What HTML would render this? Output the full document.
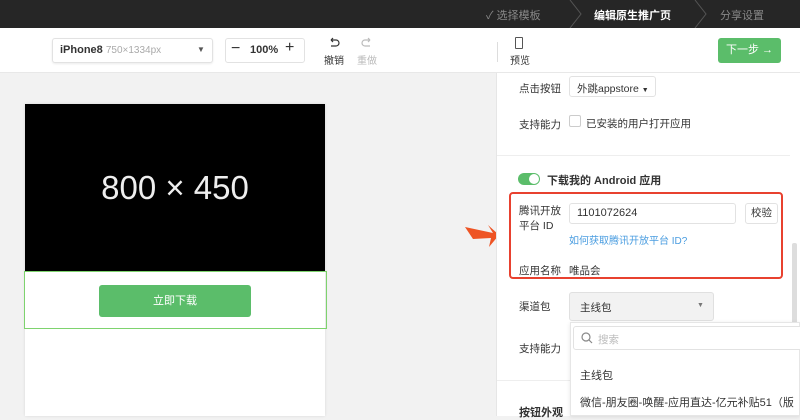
<!DOCTYPE html>
<html><head><meta charset="utf-8"><style>
*{margin:0;padding:0;box-sizing:border-box}
body{width:800px;height:416px;overflow:hidden;font-family:"Liberation Sans","Noto Sans CJK SC",sans-serif;font-size:11px;color:#333;background:#f2f2f2;position:relative}
.a{position:absolute;white-space:nowrap}
.top{left:0;top:0;width:800px;height:28px;background:#262626}
.tb{left:0;top:28px;width:800px;height:45px;background:#fff;border-bottom:1px solid #e8e8e8}
.box{border:1px solid #e2e2e2;border-radius:3px;background:#fff}
.rp{left:496px;top:73px;width:304px;height:343px;background:#fff;border-left:1px solid #e6e6e6}
.lbl{font-size:10.5px;color:#333}
</style></head><body>
<div class="a top"></div>
<div class="a" style="left:486px;top:7px;color:#888;font-size:11px">✓ 选择模板</div>
<svg class="a" style="left:568px;top:0" width="16" height="28"><path d="M2 0 L13 14 L2 28" stroke="#555" fill="none"/></svg>
<div class="a" style="left:594px;top:7px;color:#fff;font-size:11px;font-weight:bold">编辑原生推广页</div>
<svg class="a" style="left:693px;top:0" width="16" height="28"><path d="M2 0 L13 14 L2 28" stroke="#555" fill="none"/></svg>
<div class="a" style="left:720px;top:7px;color:#888;font-size:11px">分享设置</div>

<div class="a tb"></div>
<div class="a box" style="left:52px;top:38px;width:161px;height:25px;box-shadow:0 1px 2px rgba(0,0,0,.08)"></div>
<div class="a" style="left:60px;top:44px;font-size:11px;font-weight:bold">iPhone8 <span style="font-weight:normal;color:#aaa;font-size:10px">750×1334px</span></div>
<div class="a" style="left:197px;top:45px;font-size:8px;color:#555">▼</div>
<div class="a box" style="left:225px;top:38px;width:80px;height:25px"></div>
<div class="a" style="left:231px;top:40px;font-size:16px">−</div>
<div class="a" style="left:250px;top:44px;font-size:11px;font-weight:bold">100%</div>
<div class="a" style="left:285px;top:39px;font-size:16px">+</div>
<svg class="a" style="left:328px;top:37px" width="12" height="12"><path d="M3 3 H8 A3 3 0 0 1 8 9 H3 M3 3 L5 1 M3 3 L5 5" stroke="#333" fill="none" stroke-width="1.2"/></svg>
<div class="a" style="left:324px;top:52px;font-size:10px">撤销</div>
<svg class="a" style="left:361px;top:37px" width="12" height="12"><path d="M9 3 H4 A3 3 0 0 0 4 9 H9 M9 3 L7 1 M9 3 L7 5" stroke="#bbb" fill="none" stroke-width="1.2"/></svg>
<div class="a" style="left:357px;top:52px;font-size:10px;color:#bbb">重做</div>
<div class="a" style="left:497px;top:42px;width:1px;height:20px;background:#ddd"></div>
<div class="a" style="left:515px;top:37px;width:8px;height:12px;border:1px solid #555;border-radius:1px"></div>
<div class="a" style="left:510px;top:52px;font-size:10px">预览</div>
<div class="a" style="left:718px;top:38px;width:63px;height:25px;background:#5bbd6a;border-radius:3px;color:#fff;font-size:11px;line-height:25px;text-align:center">下一步 →</div>

<div class="a" style="left:25px;top:104px;width:300px;height:312px;background:#fff;box-shadow:0 0 3px rgba(0,0,0,.1)"></div>
<div class="a" style="left:25px;top:104px;width:300px;height:168px;background:#000;color:#eee;font-size:33px;text-align:center;line-height:168px">800 × 450</div>
<div class="a" style="left:24px;top:271px;width:303px;height:58px;border:1.5px solid #7ed36e"></div>
<div class="a" style="left:99px;top:285px;width:152px;height:32px;background:#5bbd6a;border-radius:3px;color:#fff;font-size:11px;line-height:32px;text-align:center">立即下载</div>

<svg class="a" style="left:463px;top:221px" width="36" height="26"><path d="M2 6 L30 12 L25 4 L36 14 L26 26 L28 17 L10 18 Z" fill="#ee5424"/></svg>

<div class="a rp"></div>
<div class="a lbl" style="left:519px;top:81px">点击按钮</div>
<div class="a box" style="left:569px;top:76px;width:87px;height:21px;padding:4px 7px;font-size:10.5px">外跳appstore <span style="font-size:7px">▼</span></div>
<div class="a lbl" style="left:519px;top:117px">支持能力</div>
<div class="a" style="left:569px;top:115px;width:12px;height:12px;border:1px solid #ccc;border-radius:2px"></div>
<div class="a lbl" style="left:586px;top:116px">已安装的用户打开应用</div>
<div class="a" style="left:497px;top:155px;width:293px;height:1px;background:#eee"></div>
<div class="a" style="left:518px;top:173px;width:22px;height:12px;border-radius:6px;background:#5bbd6a"></div>
<div class="a" style="left:529px;top:174px;width:10px;height:10px;border-radius:5px;background:#fff"></div>
<div class="a" style="left:547px;top:172px;font-size:11px;font-weight:bold">下载我的 Android 应用</div>
<div class="a" style="left:509px;top:192px;width:274px;height:87px;border:2px solid #e8412f;border-radius:4px"></div>
<div class="a lbl" style="left:519px;top:204px;line-height:15px">腾讯开放<br>平台 ID</div>
<div class="a box" style="left:569px;top:203px;width:167px;height:21px;padding:3px 7px;font-size:11px">1101072624</div>
<div class="a box" style="left:745px;top:203px;width:33px;height:21px;font-size:10.5px;text-align:center;line-height:19px">校验</div>
<div class="a" style="left:569px;top:232px;font-size:10px;color:#4a9de0">如何获取腾讯开放平台 ID?</div>
<div class="a lbl" style="left:519px;top:263px">应用名称</div>
<div class="a lbl" style="left:569px;top:263px">唯品会</div>
<div class="a" style="left:792px;top:243px;width:5px;height:87px;background:#ddd;border-radius:2px"></div>
<div class="a lbl" style="left:519px;top:299px">渠道包</div>
<div class="a" style="left:569px;top:292px;width:145px;height:29px;background:#f2f2f2;border:1px solid #e0e0e0;border-radius:3px;padding:7px 10px;font-size:10.5px">主线包</div>
<div class="a" style="left:697px;top:302px;font-size:7px;color:#777">▼</div>
<div class="a lbl" style="left:519px;top:341px">支持能力</div>
<div class="a" style="left:497px;top:380px;width:73px;height:1px;background:#eee"></div>
<div class="a" style="left:519px;top:404px;font-size:11px;font-weight:bold">按钮外观</div>
<div class="a" style="left:570px;top:322px;width:230px;height:94px;background:#fff;border:1px solid #e6e6e6;box-shadow:0 1px 4px rgba(0,0,0,.1)"></div>
<div class="a box" style="left:573px;top:326px;width:230px;height:24px"></div>
<svg class="a" style="left:581px;top:332px" width="12" height="12"><circle cx="5" cy="5" r="4" stroke="#888" stroke-width="1.2" fill="none"/><path d="M8 8 L11 11" stroke="#888" stroke-width="1.2"/></svg>
<div class="a" style="left:598px;top:332px;font-size:10.5px;color:#bbb">搜索</div>
<div class="a" style="left:580px;top:367px;font-size:11px">主线包</div>
<div class="a" style="left:580px;top:394px;font-size:11px">微信-朋友圈-唤醒-应用直达-亿元补贴51（版</div>
</body></html>
